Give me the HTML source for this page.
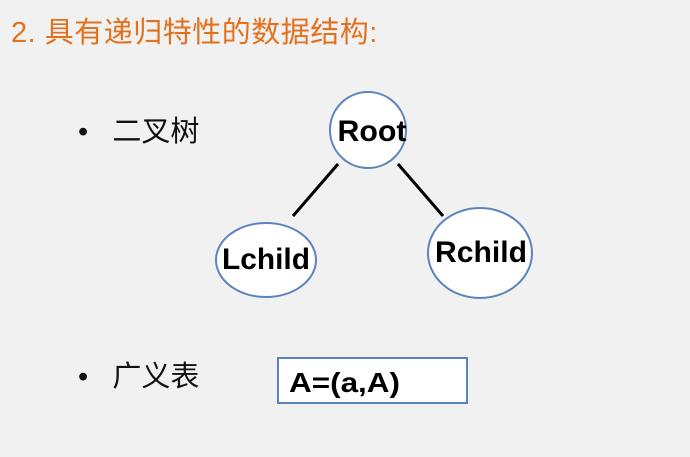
<!DOCTYPE html>
<html><head><meta charset="utf-8"><style>
body{margin:0;width:690px;height:457px;background:#f1f1f1;overflow:hidden;position:relative;font-family:"Liberation Sans","Noto Sans CJK SC",sans-serif}
.t{position:absolute;left:11px;top:9px;font-size:29px;color:#e2711d;white-space:nowrap;letter-spacing:0.5px}
.b{position:absolute;font-size:29px;color:#111;white-space:nowrap}
</style></head><body>
<div class="t">2. 具有递归特性的数据结构:</div>
<div class="b" style="left:78px;top:108px">•&nbsp;&nbsp;&nbsp;二叉树</div>
<div class="b" style="left:78px;top:353px">•&nbsp;&nbsp;&nbsp;广义表</div>
<svg width="690" height="457" style="position:absolute;left:0;top:0" font-family="Liberation Sans, sans-serif" font-weight="bold">
<line x1="338" y1="164" x2="293" y2="216" stroke="#000" stroke-width="3"/>
<line x1="398" y1="164" x2="443" y2="216" stroke="#000" stroke-width="3"/>
<circle cx="368" cy="130" r="38" fill="#fff" stroke="#5b84bf" stroke-width="2"/>
<ellipse cx="266" cy="260" rx="50" ry="37" fill="#fff" stroke="#5b84bf" stroke-width="2"/>
<ellipse cx="480" cy="253" rx="52" ry="45" fill="#fff" stroke="#5b84bf" stroke-width="2"/>
<text x="372" y="141" font-size="30" text-anchor="middle" textLength="69" lengthAdjust="spacingAndGlyphs">Root</text>
<text x="266" y="269" font-size="30" text-anchor="middle" textLength="88" lengthAdjust="spacingAndGlyphs">Lchild</text>
<text x="481" y="262" font-size="30" text-anchor="middle" textLength="92" lengthAdjust="spacingAndGlyphs">Rchild</text>
<rect x="278" y="358" width="189" height="45" fill="#fff" stroke="#5b84bf" stroke-width="2"/>
<text x="289" y="392" font-size="28" textLength="111" lengthAdjust="spacingAndGlyphs">A=(a,A)</text>
</svg>
</body></html>
